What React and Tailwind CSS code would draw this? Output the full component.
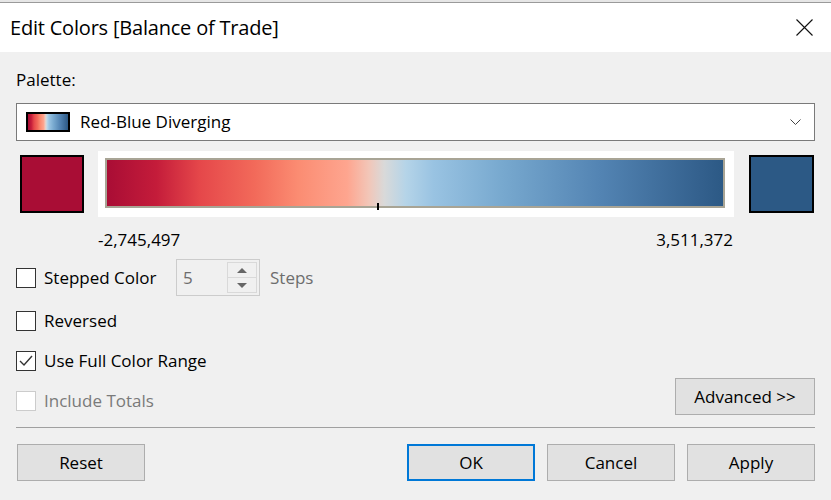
import React from "react";

// gradient used by the big bar and the small palette swatch
const RAMP =
  "bg-[linear-gradient(to_right,#a90d35_0%,#c41c3a_8%,#e5474a_15%,#f26a5a_24%,#fb8c72_31%,#fea58f_39%,#f2c6b8_42.5%,#d9d9d9_45%,#b5d4e8_48.5%,#99c3e2_53%,#78a9cf_64%,#5384b3_80%,#34618e_96%,#2c5985_100%)]";

function Checkbox({ checked, disabled }) {
  return (
    <div
      className={
        "w-[20px] h-[20px] bg-white border flex items-center justify-center shrink-0 " +
        (disabled ? "border-[#cccccc]" : "border-[#333333]")
      }
    >
      {checked && (
        <svg width="14" height="12" viewBox="0 0 14 12">
          <polyline points="1,6 5,10 13,1" fill="none" stroke="#333" strokeWidth="1.4" />
        </svg>
      )}
    </div>
  );
}

function Button({ children, primary, className = "" }) {
  return (
    <div
      className={
        "h-[37px] w-[128px] flex items-center justify-center bg-[#e1e1e1] text-[17px] text-black " +
        (primary ? "border-2 border-[#0078d7]" : "border border-[#adadad]") +
        " " +
        className
      }
    >
      {children}
    </div>
  );
}

export default function App() {
  return (
    <div className="w-[831px] h-[500px] bg-[#f0f0f0] overflow-hidden font-['Open_Sans',sans-serif] text-black">

      {/* window edge */}
      <div className="h-[2px] bg-[#e6e6e6]" />
      <div className="h-px bg-[#9a9a9a]" />

      {/* TITLE BAR */}
      <div className="h-[49px] bg-white flex items-center justify-between pl-[10px] pr-[18px]">
        <span className="text-[20px] tracking-[-0.2px]">Edit Colors [Balance of Trade]</span>
        <svg width="17" height="17" viewBox="0 0 17 17">
          <path d="M0.5 0.5 L16.5 16.5 M16.5 0.5 L0.5 16.5" stroke="#111" strokeWidth="1.1" />
        </svg>
      </div>

      <div className="px-4 text-[17px]">

        <div className="mt-[18px] h-[20px] leading-[20px]">Palette:</div>

        {/* PALETTE DROPDOWN */}
        <div className="mt-[13px] h-[38px] bg-white border border-[#7a7a7a] flex items-center pl-[9px] pr-[13px]">
          <div className={"w-[44px] h-[20px] border-2 border-black " + RAMP} />
          <span className="ml-[10px] flex-1">Red-Blue Diverging</span>
          <svg width="11" height="7" viewBox="0 0 11 7">
            <polyline points="0.5,0.5 5.5,5.5 10.5,0.5" fill="none" stroke="#444" strokeWidth="1" />
          </svg>
        </div>

        {/* COLOR RAMP */}
        <div className="mt-[10px] flex items-center">
          <div className="ml-[4px] w-[64px] h-[58px] bg-[#a90d35] border-2 border-black" />
          <div className="ml-[14px] w-[636px] h-[66px] bg-white pt-[7px] pl-[7px]">
            <div className="relative w-[620px] h-[50px]">
              <div className={"w-full h-full border-2 border-[#a8a495] " + RAMP} />
              <div className="absolute left-[272px] top-[45px] w-[2px] h-[7px] bg-black" />
            </div>
          </div>
          <div className="ml-[15px] w-[65px] h-[58px] bg-[#2c5985] border-2 border-black" />
        </div>

        <div className="mt-[13px] h-[20px] leading-[20px] flex justify-between pl-[82px] pr-[82px]">
          <span>-2,745,497</span>
          <span>3,511,372</span>
        </div>

        {/* STEPPED */}
        <div className="mt-[9px] h-[37px] flex items-center">
          <Checkbox />
          <span className="ml-[8px] w-[132px]">Stepped Color</span>
          <div className="w-[84px] h-[37px] border border-[#cccccc] flex items-center justify-between pl-[6px] pr-[2px]">
            <span className="text-[#6d6d6d]">5</span>
            <div className="w-[30px] h-[31px] border border-[#d9d9d9] flex flex-col">
              <div className="flex-1 flex items-center justify-center border-b border-[#d9d9d9]">
                <svg width="10" height="5" viewBox="0 0 10 5"><polygon points="0,5 5,0 10,5" fill="#666" /></svg>
              </div>
              <div className="flex-1 flex items-center justify-center">
                <svg width="10" height="5" viewBox="0 0 10 5"><polygon points="0,0 10,0 5,5" fill="#666" /></svg>
              </div>
            </div>
          </div>
          <span className="ml-[10px] text-[#6d6d6d]">Steps</span>
        </div>

        <div className="mt-[15px] h-[20px] flex items-center">
          <Checkbox />
          <span className="ml-[8px]">Reversed</span>
        </div>

        <div className="mt-[20px] h-[20px] flex items-center">
          <Checkbox checked />
          <span className="ml-[8px]">Use Full Color Range</span>
        </div>

        <div className="mt-[7px] flex justify-between items-start">
          <div className="mt-[13px] h-[20px] flex items-center">
            <Checkbox disabled />
            <span className="ml-[8px] text-[#7a7a7a]">Include Totals</span>
          </div>
          <Button className="w-[140px]">Advanced &gt;&gt;</Button>
        </div>

        <div className="mt-[12px] h-px bg-[#a0a0a0]" />

        {/* FOOTER */}
        <div className="mt-[16px] flex items-center">
          <Button className="ml-px">Reset</Button>
          <div className="flex-1" />
          <div className="flex gap-[12px]">
            <Button primary>OK</Button>
            <Button>Cancel</Button>
            <Button>Apply</Button>
          </div>
        </div>

      </div>
    </div>
  );
}
